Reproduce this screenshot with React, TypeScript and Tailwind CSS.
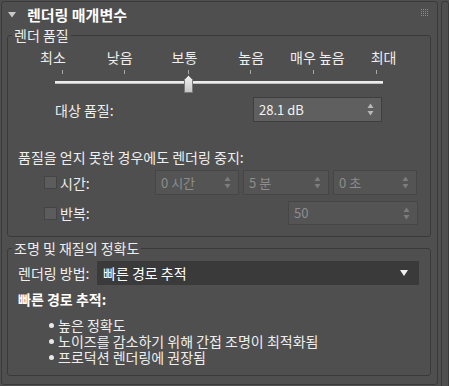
import { ReactNode } from 'react';

const FONT = { fontFamily: '"Noto Sans CJK KR", "Noto Sans", sans-serif' };

function SpinArrows({ dim }: { dim?: boolean }) {
  const c = dim ? '#7c7c7c' : '#b8b8b8';
  return (
    <svg width="7" height="13" viewBox="0 0 7 13" className="shrink-0">
      <path d="M3.5 0.5 L6.5 5 L0.5 5 Z" fill={c} />
      <path d="M0.5 8 L6.5 8 L3.5 12.5 Z" fill={c} />
    </svg>
  );
}

function SpinBox({ value, width, dim, height = 25 }: { value: string; width: number; dim?: boolean; height?: number }) {
  return (
    <div
      className={
        dim
          ? 'flex items-center justify-between pl-[5px] pr-[7px] text-[13px] border border-[#464646] bg-[#545454] text-[#8d8d8d]'
          : 'flex items-center justify-between pl-[5px] pr-[7px] text-[13px] border border-[#3e3e3e] bg-[#5f5f5f] text-[#f2f2f2]'
      }
      style={{ width, height }}
    >
      <span>{value}</span>
      <SpinArrows dim={dim} />
    </div>
  );
}

function CheckRow({ label, children }: { label: string; children: ReactNode }) {
  return (
    <div className="flex items-center">
      <div className="ml-[36px] w-[13px] h-[13px] border border-[#444] bg-[#5c5c5c]" />
      <span className="ml-[3px] w-[60px]">{label}</span>
      {children}
    </div>
  );
}

function GridDots() {
  const dots = [];
  for (let r = 0; r < 4; r++)
    for (let c = 0; c < 4; c++)
      dots.push(<rect key={r * 4 + c} x={c * 2} y={r * 2} width="1" height="1" fill="#8e8e8e" />);
  return (
    <svg width="8" height="8" viewBox="0 0 8 8">
      {dots}
    </svg>
  );
}

const ticks = [62, 124, 188, 250, 313, 376];

export default function App() {
  return (
    <div className="w-[449px] h-[386px] bg-[#4f4f4f] flex text-[14px] leading-[16px] text-[#eeeeee] overflow-hidden" style={FONT}>
      <div className="ml-[1px] mt-[1px] w-[437px] h-[384px] border border-[#3a3a3a] rounded-[3px] flex flex-col">
        {/* header */}
        <div className="h-[25px] flex items-center pl-[6px] pr-[8px]">
          <svg width="8" height="6" viewBox="0 0 8 6">
            <path d="M0 0 L8 0 L4 5.5 Z" fill="#c8c8c8" />
          </svg>
          <span className="ml-[11px] text-[15px] font-bold text-white">렌더링 매개변수</span>
          <div className="ml-auto mt-[-3px]">
            <GridDots />
          </div>
        </div>

        {/* render quality */}
        <fieldset className="ml-[5px] w-[424px] h-[210px] border border-[#3a3a3a] rounded-[3px] flex flex-col">
          <legend className="ml-[4px] px-[2px]">렌더 품질</legend>
          <div className="flex mt-[6px] whitespace-nowrap">
            <span className="ml-[32px]">최소</span>
            <span className="ml-[41px]">낮음</span>
            <span className="ml-[39px]">보통</span>
            <span className="ml-[41px]">높음</span>
            <span className="ml-[26px]">매우 높음</span>
            <span className="ml-[26px]">최대</span>
          </div>
          <div className="relative mt-[5px] h-[22px]">
            <div className="flex h-[4px]">
              {ticks.map((t, i) => (
                <div
                  key={t}
                  className="w-px h-[4px] bg-[#a8a8a8]"
                  style={{ marginLeft: i === 0 ? t - 8 : t - ticks[i - 1] - 1 }}
                />
              ))}
            </div>
            <div className="ml-[47px] mt-[7px] w-[328px] h-[3px] bg-[#ececec] border-b border-[#c0c0c0]" />
            <svg className="absolute left-[176px] top-[5px]" width="9" height="18" viewBox="0 0 9 18">
              <defs>
                <linearGradient id="th" x1="0" x2="0" y1="0" y2="1">
                  <stop offset="0" stopColor="#f4f4f4" />
                  <stop offset="1" stopColor="#c4c4c4" />
                </linearGradient>
              </defs>
              <path d="M4.5 0.5 L8.5 4.5 L8.5 17.5 L0.5 17.5 L0.5 4.5 Z" fill="url(#th)" stroke="#7a7a7a" strokeWidth="1" />
            </svg>
          </div>
          <div className="flex items-center mt-[5px]">
            <span className="ml-[47px] w-[198px]">대상 품질:</span>
            <SpinBox value="28.1 dB" width={129} />
          </div>
          <div className="mt-[27px] ml-[10px] whitespace-nowrap">품질을 얻지 못한 경우에도 렌더링 중지:</div>
          <div className="mt-[5px]">
            <CheckRow label="시간:">
              <div className="ml-[35px] flex gap-[4px]">
                <SpinBox value="0 시간" width={84} dim />
                <SpinBox value="5 분" width={86} dim />
                <SpinBox value="0 초" width={84} dim />
              </div>
            </CheckRow>
          </div>
          <div className="mt-[6px]">
            <CheckRow label="반복:">
              <div className="ml-[168px]">
                <SpinBox value="50" width={130} height={24} dim />
              </div>
            </CheckRow>
          </div>
        </fieldset>

        {/* lighting / material accuracy */}
        <fieldset className="ml-[5px] mt-[3px] w-[424px] h-[136px] border border-[#3a3a3a] rounded-[3px] flex flex-col">
          <legend className="ml-[4px] px-[2px]">조명 및 재질의 정확도</legend>
          <div className="flex items-center mt-[5px]">
            <span className="ml-[10px] w-[79px] whitespace-nowrap">렌더링 방법:</span>
            <div className="w-[322px] h-[24px] bg-[#3a3a3a] flex items-center justify-between pl-[6px] pr-[11px] text-white">
              <span>빠른 경로 추적</span>
              <svg width="8" height="6" viewBox="0 0 8 6">
                <path d="M0 0 L8 0 L4 6 Z" fill="#f0f0f0" />
              </svg>
            </div>
          </div>
          <div className="mt-[6px] ml-[10px] font-bold text-white">빠른 경로 추적:</div>
          <ul className="mt-[10px] ml-[41px] flex flex-col">
            {['높은 정확도', '노이즈를 감소하기 위해 간접 조명이 최적화됨', '프로덕션 렌더링에 권장됨'].map((t) => (
              <li key={t} className="flex items-center h-[16px] whitespace-nowrap">
                <span className="w-[5px] h-[5px] rounded-full bg-[#e8e8e8]" />
                <span className="ml-[4px] block h-[16px] leading-[16px]">{t}</span>
              </li>
            ))}
          </ul>
        </fieldset>
      </div>
      <div className="ml-[3px] mt-[1px] w-[8px] h-[390px] border border-[#3a3a3a] rounded-[3px]" />
    </div>
  );
}
